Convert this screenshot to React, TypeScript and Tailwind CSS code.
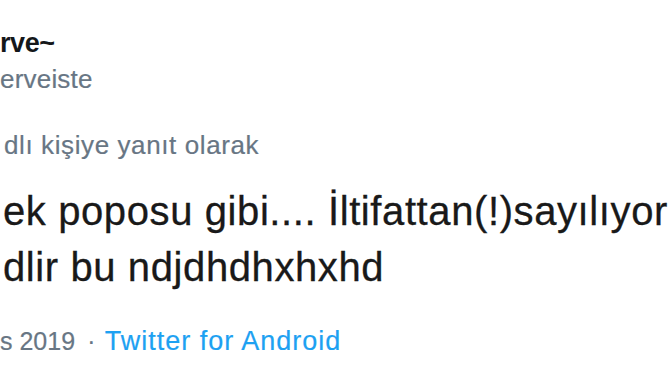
import React from "react";

export default function App() {
  const font = { fontFamily: '"Liberation Sans", Arial, Helvetica, sans-serif' };
  return (
    <div
      className="w-[672px] h-[378px] overflow-hidden bg-white flex flex-col antialiased"
      style={font}
    >
      <div className="pt-[28px] text-[27px] leading-[30px] font-bold text-[#14171a] tracking-[-0.4px]">
        rve~
      </div>
      <div className="mt-[6px] text-[26px] leading-[30px] text-[#687684] tracking-[0.2px] [-webkit-text-stroke:0.2px_#687684]">
        erveiste
      </div>
      <div className="mt-[36px] pl-[4px] text-[26px] leading-[30px] text-[#687684] tracking-[0.6px] [-webkit-text-stroke:0.2px_#687684]">
        dlı kişiye yanıt olarak
      </div>
      <div className="mt-[23px] pl-[3px] text-[40px] leading-[56px] text-[#191919] tracking-[0.6px] whitespace-nowrap [-webkit-text-stroke:0.3px_#191919]">
        <div>ek poposu gibi.... İltifattan(!)sayılıyor</div>
        <div>dlir bu ndjdhdhxhxhd</div>
      </div>
      <div className="mt-[31px] text-[26px] leading-[30px] whitespace-nowrap flex items-baseline">
        <span className="text-[25px] text-[#687684] tracking-[0px] [-webkit-text-stroke:0.2px_#687684]">s 2019</span>
        <span className="text-[#687684] ml-[12px] mr-[9px]">·</span>
        <span className="text-[27px] text-[#1da1f2] tracking-[1px] [-webkit-text-stroke:0.2px_#1da1f2]">Twitter for Android</span>
      </div>
    </div>
  );
}
